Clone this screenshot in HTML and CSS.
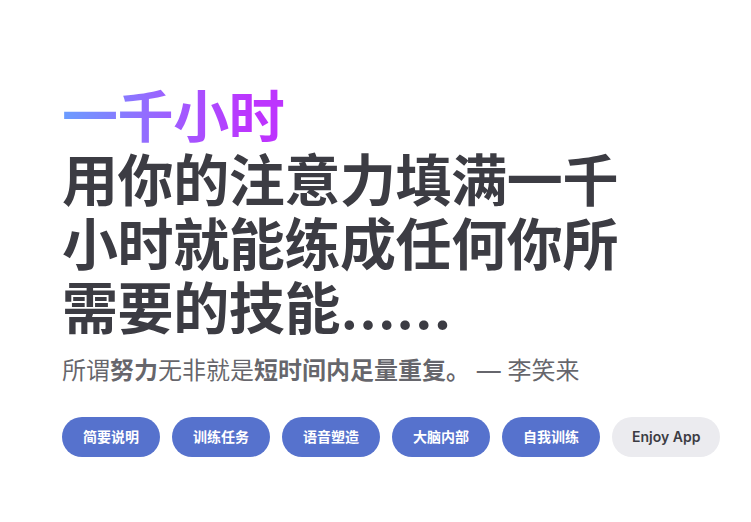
FILE: index.html
```html
<!DOCTYPE html>
<html lang="zh-CN">
<head>
<meta charset="utf-8">
<title>一千小时</title>
<link rel="stylesheet" href="styles.css">
</head>
<body>
<main class="hero">
  <h1 class="heading">
    <span class="name">一千小时</span>
    <span class="text">用你的注意力填满一千小时就能练成任何你所需要的技能……</span>
  </h1>
  <p class="tagline">所谓<strong>努力</strong>无非就是<strong>短时间内足量重复。</strong> — 李笑来</p>
  <div class="actions">
    <div class="action"><a class="button brand" href="#">简要说明</a></div>
    <div class="action"><a class="button brand" href="#">训练任务</a></div>
    <div class="action"><a class="button brand" href="#">语音塑造</a></div>
    <div class="action"><a class="button brand" href="#">大脑内部</a></div>
    <div class="action"><a class="button brand" href="#">自我训练</a></div>
    <div class="action"><a class="button alt" href="#">Enjoy App</a></div>
  </div>
</main>
</body>
</html>
```
FILE: styles.css
```css
html, body {
  margin: 0;
  padding: 0;
  background: #ffffff;
}

body {
  font-family: Inter, "Noto Sans CJK SC", "Noto Sans", sans-serif;
  color: #3c3c43;
  -webkit-font-smoothing: antialiased;
}

.hero {
  padding: 85px 8px 40px 62px;
}

.heading {
  display: flex;
  flex-direction: column;
  margin: 0;
}

.name,
.text {
  max-width: 592px;
  font-size: 56px;
  line-height: 64px;
  font-weight: 700;
  letter-spacing: -0.4px;
  white-space: pre-wrap;
}

.name {
  width: fit-content;
  background: linear-gradient(90deg, #6a9dff 0%, #9b63ff 45%, #bd34fe 85%);
  -webkit-background-clip: text;
  background-clip: text;
  -webkit-text-fill-color: transparent;
  color: transparent;
}

.text {
  color: #3c3c43;
}

.tagline {
  margin: 0;
  padding-top: 12px;
  max-width: 640px;
  font-size: 24px;
  line-height: 36px;
  font-weight: 400;
  color: rgba(60, 60, 67, 0.78);
}

.tagline strong {
  font-weight: 700;
}

.actions {
  display: flex;
  flex-wrap: wrap;
  margin: -6px;
  padding-top: 28px;
}

.action {
  flex-shrink: 0;
  padding: 6px;
}

.button {
  display: inline-block;
  border: 1px solid transparent;
  border-radius: 20px;
  padding: 0 20px;
  line-height: 38px;
  font-size: 14px;
  font-weight: 600;
  text-align: center;
  white-space: nowrap;
  text-decoration: none;
}

.brand {
  background: #5672cd;
  color: #ffffff;
}

.alt {
  padding: 0 19px;
  background: #ebebef;
  color: #3c3c43;
}
```
